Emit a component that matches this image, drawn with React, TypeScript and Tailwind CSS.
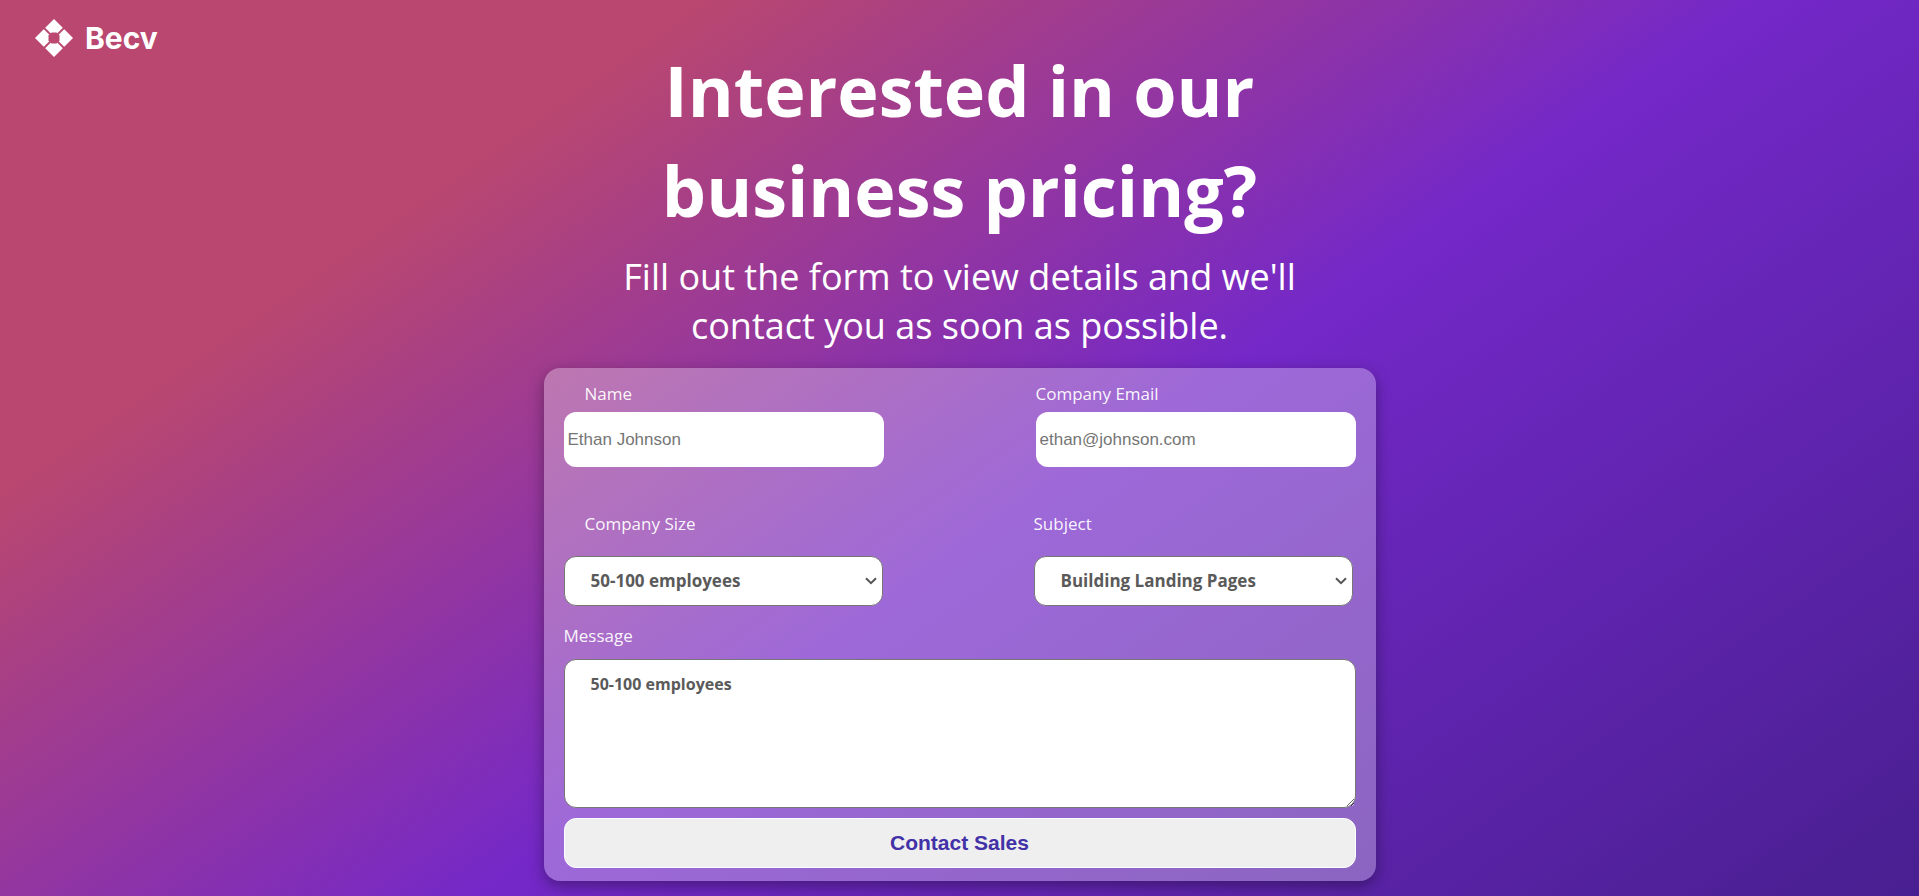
import type { ReactNode } from "react";

const labelText = "text-[17px] leading-6 text-white/95";
const inputStyle =
  "h-[55px] w-80 max-w-full rounded-xl bg-white px-1 font-['Liberation_Sans',Arial,sans-serif] text-[17px] text-gray-700 placeholder:text-[#757575]";

function Logo() {
  return (
    <a href="#" className="flex items-center gap-3 text-white">
      <svg viewBox="0 0 38 38" className="size-[38px]" aria-hidden="true">
        <path fill="currentColor" d="M19 0 38 19 19 38 0 19Z" />
        <path stroke="#ba4870" strokeWidth="1.8" d="M9 9 29 29M29 9 9 29" />
        <path fill="#ba4870" d="M16.5 13.5h5l3 3v5l-3 3h-5l-3-3v-5Z" />
      </svg>
      <span className="font-['Inter',sans-serif] text-[30px] leading-9 font-bold">Becv</span>
    </a>
  );
}

function Field({ id, label, className, children }: { id: string; label: string; className: string; children: ReactNode }) {
  return (
    <div className="flex flex-col">
      <label htmlFor={id} className={`${labelText} ${className}`}>
        {label}
      </label>
      {children}
    </div>
  );
}

function Select({ id, options }: { id: string; options: string[] }) {
  return (
    <div className="relative h-[50px] w-[319px] max-w-full">
      <select
        id={id}
        className="size-full appearance-none rounded-xl border border-[#767676] bg-white pr-8 pl-[26px] text-[17px] font-bold text-[#5a5a5a]"
      >
        {options.map((option) => (
          <option key={option}>{option}</option>
        ))}
      </select>
      <svg
        viewBox="0 0 12 8"
        className="pointer-events-none absolute top-[21px] right-1.5 h-2 w-3"
        fill="none"
        stroke="#555555"
        strokeWidth="2"
        aria-hidden="true"
      >
        <path d="M1 1.2 6 6.2 11 1.2" />
      </svg>
    </div>
  );
}

export default function App() {
  return (
    <div className="min-h-screen bg-[linear-gradient(145deg,#b9476f_22%,#7428c8_55%,#481f90_100%)] pb-[15px] font-['Open_Sans','Noto_Sans',sans-serif] text-white">
      <header className="h-10 px-[35px] pt-[19px]">
        <Logo />
      </header>
      <main className="mx-auto flex max-w-[832px] flex-col">
        <h1 className="mb-3 text-center text-[70px] leading-[100px] font-bold">
          Interested in our
          <br />
          business pricing?
        </h1>
        <p className="mb-[18px] text-center text-[36px] leading-[49px]">
          Fill out the form to view details and we'll
          <br />
          contact you as soon as possible.
        </p>
        <form
          className="rounded-2xl bg-white/30 p-5 pt-3.5 pb-[13px] shadow-[0_5px_15px_rgba(0,0,0,0.35)]"
          onSubmit={(event) => event.preventDefault()}
        >
          <div className="flex flex-wrap justify-between">
            <Field id="name" label="Name" className="mb-1.5 pl-[21px]">
              <input id="name" type="text" placeholder="Ethan Johnson" className={inputStyle} />
            </Field>
            <Field id="email" label="Company Email" className="mb-1.5">
              <input id="email" type="email" placeholder="ethan@johnson.com" className={inputStyle} />
            </Field>
          </div>
          <div className="mt-[45px] flex flex-wrap justify-between pr-[3px]">
            <Field id="size" label="Company Size" className="mb-5 pl-[21px]">
              <Select id="size" options={["50-100 employees"]} />
            </Field>
            <Field id="subject" label="Subject" className="mb-5">
              <Select id="subject" options={["Building Landing Pages"]} />
            </Field>
          </div>
          <div className="mt-[18px]">
            <Field id="message" label="Message" className="mb-[11px]">
              <textarea
                id="message"
                defaultValue="50-100 employees"
                className="h-[149px] rounded-xl border border-[#767676] bg-white px-[26px] py-3 text-[16px] leading-6 font-bold text-[#5a5a5a]"
              />
            </Field>
          </div>
          <button
            type="submit"
            className="mt-2.5 h-[50px] w-full rounded-xl border border-white bg-[#efefef] font-['Liberation_Sans',Arial,sans-serif] text-[21px] font-bold text-[#4331a8]"
          >
            Contact Sales
          </button>
        </form>
      </main>
    </div>
  );
}
